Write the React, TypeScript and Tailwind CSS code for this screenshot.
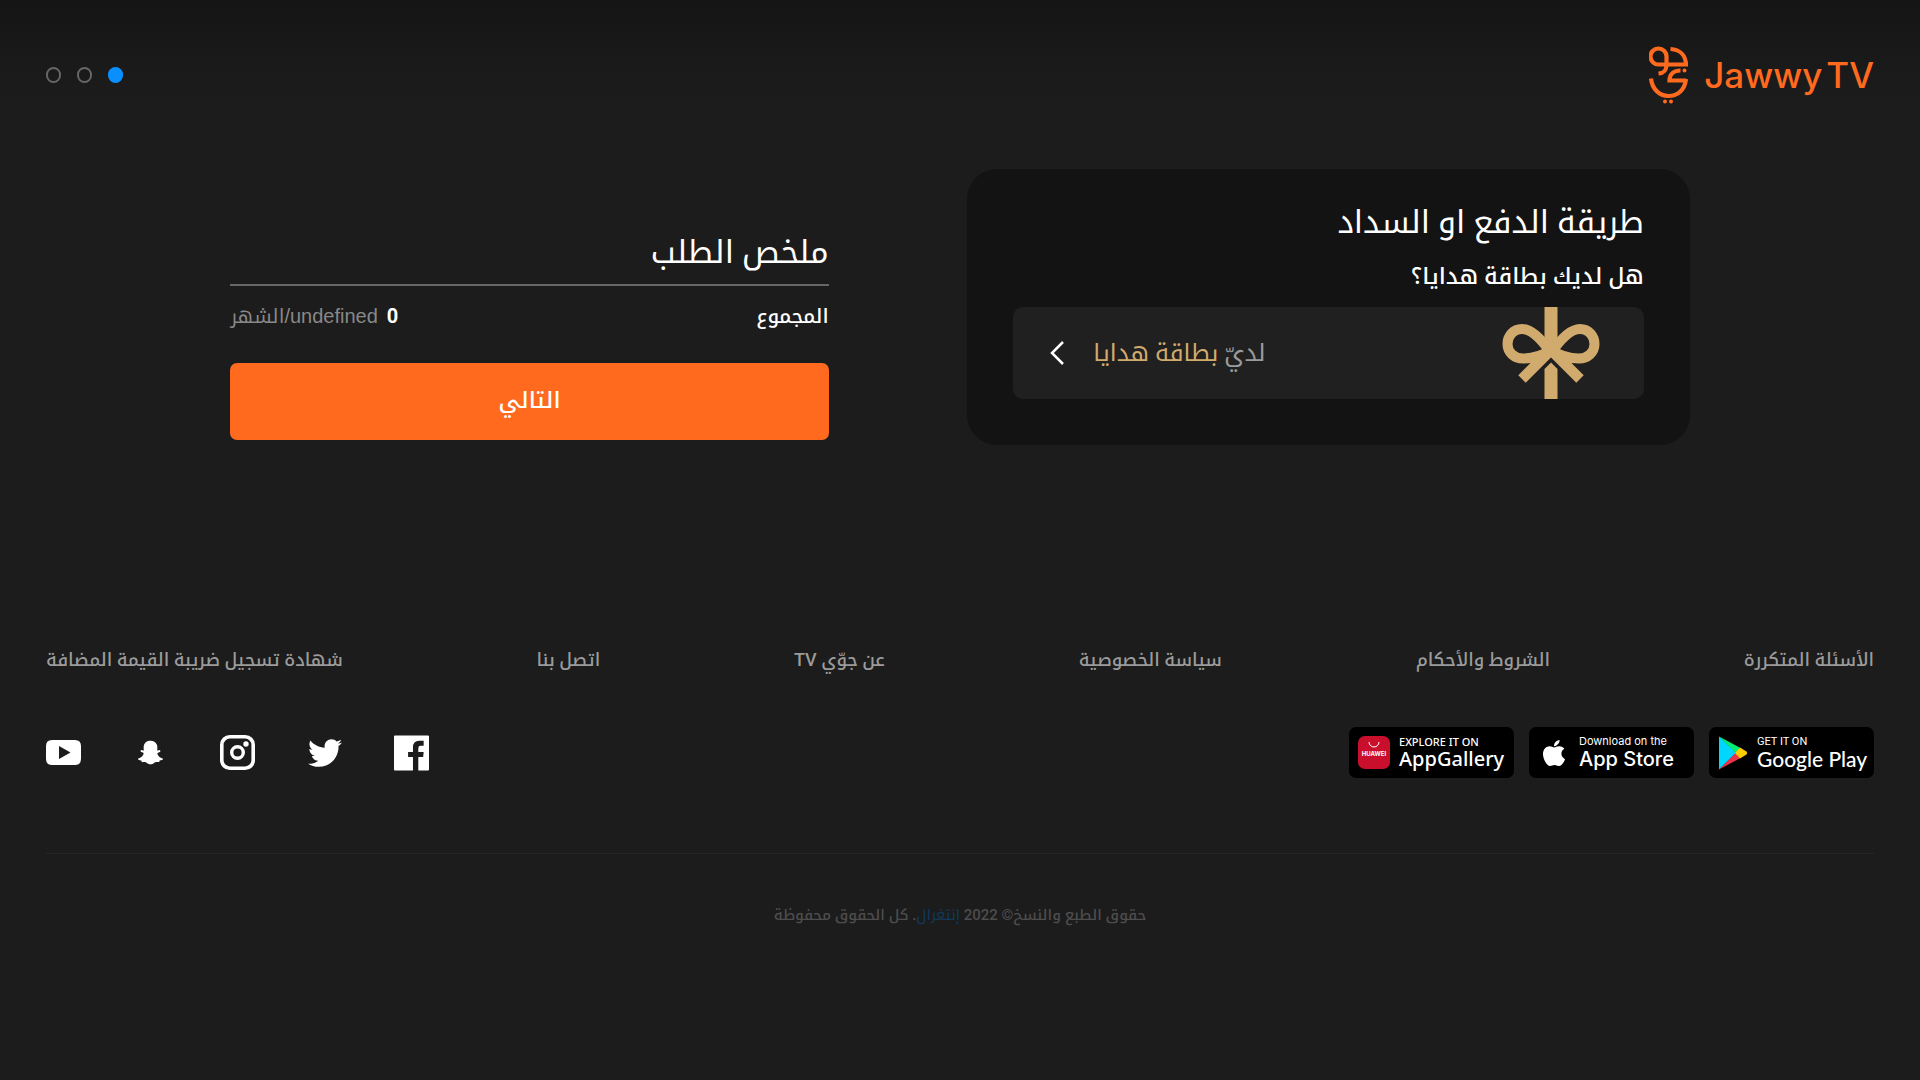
import React from "react";
import { FaApple, FaSnapchatGhost, FaTwitter } from "react-icons/fa";

function Logo() {
  return (
    <a href="#home" dir="ltr" aria-label="Jawwy TV" className="flex items-center gap-[15px] text-[#ff6a1f]">
      <svg viewBox="0 0 40 58" className="h-[58px] w-10" fill="none" stroke="currentColor" strokeWidth="4.2">
        <path d="M39 18.500H10A8 8 0 1 1 17.500 10.500V18.500C17.500 24.500 15 27 9.500 27.500" />
        <path d="M21.500 3C31 3.500 37 9.500 37 19.500" />
        <path d="M37 34.500H20.500C20.500 28 25 24.500 31.500 24.500" />
        <path d="M2 32.500C3 42.500 10 50 19.500 50S36 43.500 37 33" />
        <circle cx="35.500" cy="24.500" r="2" fill="currentColor" stroke="none" />
        <circle cx="16" cy="55.500" r="2" fill="currentColor" stroke="none" />
        <circle cx="22" cy="55.500" r="2" fill="currentColor" stroke="none" />
      </svg>
      <span className="flex gap-1 font-['Inter'] text-[35px] leading-none font-medium">
        <span>Jawwy</span>
        <span>TV</span>
      </span>
    </a>
  );
}

function Bow() {
  return (
    <svg viewBox="0 0 100 92" className="h-[92px] w-[100px]" fill="none" stroke="#d1ab6d">
      <path d="M50 0V46" strokeWidth="13" />
      <path d="M43.500 92V62L50 55.500L56.500 62V92Z" fill="#d1ab6d" stroke="none" />
      <path d="M50 46C41 33 31 22 21 22C12 22 6.500 29.500 6.500 37C6.500 45.500 13.500 51.500 22 51.500C32 51.500 41 49 50 43" strokeWidth="10" />
      <path d="M50 46C59 33 69 22 79 22C88 22 93.500 29.500 93.500 37C93.500 45.500 86.500 51.500 78 51.500C68 51.500 59 49 50 43" strokeWidth="10" />
      <path d="M52 41L21 72M48 41L79 72" strokeWidth="10.500" />
    </svg>
  );
}

function HuaweiIcon() {
  return (
    <span className="flex h-[33px] w-8 flex-col items-center rounded-[7px] bg-[#ca0f2c] pt-[6px]">
      <svg viewBox="0 0 12 6" className="h-[6px] w-3" fill="none" stroke="white" strokeWidth="1">
        <path d="M1 0A5 5 0 0 0 11 0" />
      </svg>
      <span className="mt-[2px] font-['Inter'] text-[6px] leading-[8px] font-bold">HUAWEI</span>
    </span>
  );
}

function PlayIcon() {
  return (
    <svg viewBox="0 0 30 34" className="h-[34px] w-[30px]">
      <path d="M1 0.500V33.500L18 17Z" fill="#00d7fe" />
      <path d="M1 0.500L22.500 12L17.500 17Z" fill="#00ee76" />
      <path d="M1 33.500L22.500 22L17.500 17Z" fill="#ee3348" />
      <path d="M22 11.500L28.500 15.500Q30 17 28.500 18.500L22 22.500L17 17Z" fill="#ffcc00" />
    </svg>
  );
}

const badges = [
  {
    label: "Google Play",
    icon: <PlayIcon />,
    top: "GET IT ON",
    bottom: "Google Play",
    iconClass: "flex w-12 shrink-0 justify-center",
    topClass: "font-['Roboto'] text-[11px] leading-[13px]",
    bottomClass: "font-['Lato'] text-[21px] leading-[22px] font-medium",
  },
  {
    label: "App Store",
    icon: <FaApple className="size-[30px]" />,
    top: "Download on the",
    bottom: "App Store",
    iconClass: "flex w-[50px] shrink-0 justify-center",
    topClass: "font-['Inter'] text-[11px] leading-[13px]",
    bottomClass: "font-['Inter'] text-[20px] leading-[22px] font-medium",
  },
  {
    label: "AppGallery",
    icon: <HuaweiIcon />,
    top: "EXPLORE IT ON",
    bottom: "AppGallery",
    iconClass: "flex w-[50px] shrink-0 justify-center",
    topClass: "font-['Noto_Sans'] text-[11px] leading-[13px] font-medium",
    bottomClass: "font-['Noto_Sans'] text-[20px] leading-[22px] font-medium",
  },
];

const socials = [
  {
    label: "Facebook",
    icon: (
      <svg viewBox="0 0 36 36" className="size-9" fill="currentColor">
        <path d="M1 0H35Q36 0 36 1V35Q36 36 35 36H25V22H30L30.500 17H25V13Q25 10.500 27.500 10.500H30.500V5.500H26Q19.500 5.500 19.500 12.500V17H14.500V22H19.500V36H1Q0 36 0 35V1Q0 0 1 0Z" />
      </svg>
    ),
  },
  { label: "Twitter", icon: <FaTwitter className="size-[34px]" /> },
  {
    label: "Instagram",
    icon: (
      <svg viewBox="0 0 35 35" className="size-[35px]" fill="none" stroke="currentColor">
        <rect x="1.800" y="1.800" width="31.400" height="31.400" rx="8" strokeWidth="3.600" />
        <circle cx="17.500" cy="17.500" r="5.800" strokeWidth="3.400" />
        <circle cx="26" cy="9" r="2.700" fill="currentColor" stroke="none" />
      </svg>
    ),
  },
  { label: "Snapchat", icon: <FaSnapchatGhost className="size-[25px]" /> },
  {
    label: "YouTube",
    icon: (
      <svg viewBox="0 0 35 25" className="h-[25px] w-[35px]" fill="currentColor">
        <path fillRule="evenodd" d="M6 0H29Q35 0 35 6V19Q35 25 29 25H6Q0 25 0 19V6Q0 0 6 0ZM13 6V19L24.500 12.500Z" />
      </svg>
    ),
  },
];

const links = [
  "الأسئلة المتكررة",
  "الشروط والأحكام",
  "سياسة الخصوصية",
  "عن جوّي TV",
  "اتصل بنا",
  "شهادة تسجيل ضريبة القيمة المضافة",
];

export default function App() {
  return (
    <div
      dir="rtl"
      lang="ar"
      className="min-h-screen bg-[#1c1c1c] bg-[linear-gradient(#151515,#1c1c1c_100px)] bg-no-repeat pb-10 font-['Roboto','Noto_Kufi_Arabic',sans-serif] text-white"
    >
      <header className="flex items-center justify-between px-[46px] pt-[46px]">
        <Logo />
        <ol className="flex gap-4">
          <li className="h-4 w-[15px] rounded-full bg-[#0a8fff]" />
          <li className="h-4 w-[15px] rounded-full border-2 border-[#666]" />
          <li className="h-4 w-[15px] rounded-full border-2 border-[#666]" />
        </ol>
      </header>

      <main className="flex items-start justify-between px-[12%] pt-[65px]">
        <section className="w-[49.5%] rounded-[30px] bg-[#131313] p-[46px] pt-8">
          <h1 className="text-[32px] leading-[42px]">طريقة الدفع او السداد</h1>
          <h2 className="mt-[18px] text-[23px] leading-[32px] font-medium">هل لديك بطاقة هدايا؟</h2>
          <button className="mt-[14px] flex h-[92px] w-full items-center justify-between rounded-[10px] bg-[#202020] ps-[43px] pe-[37px]">
            <Bow />
            <span className="flex items-center gap-[29px]">
              <span className="text-[24px] text-[#9b9b9b]">
                لديّ <span className="text-[#d1ab6d]">بطاقة هدايا</span>
              </span>
              <svg viewBox="0 0 14 24" className="h-6 w-[14px]" fill="none" stroke="white" strokeWidth="2.500">
                <path d="M13 1L2 12L13 23" />
              </svg>
            </span>
          </button>
        </section>
        <section className="mt-[62px] w-[41%]">
          <h2 className="border-b-2 border-[#666] pb-[11px] text-[32px] leading-[42px]">ملخص الطلب</h2>
          <div className="mt-[15px] flex justify-between text-[20px] leading-[30px] font-medium">
            <span>المجموع</span>
            <span>
              <b className="me-1">0</b>{" "}
              <span className="font-['Liberation_Sans','Noto_Kufi_Arabic'] font-normal text-[#888]">undefined/الشهر</span>
            </span>
          </div>
          <button className="mt-8 h-[77px] w-full rounded-[7px] bg-[#ff6a1f] text-[23px] font-medium">التالي</button>
        </section>
      </main>

      <footer className="mt-[200px] px-[46px]">
        <nav className="flex justify-between text-[18px] leading-[30px] font-medium text-[#9b9b9b]">
          {links.map((l) => (
            <a key={l} href="#info">
              {l}
            </a>
          ))}
        </nav>
        <div className="mt-[52px] flex items-center justify-between">
          <div className="flex gap-[15px]">
            {badges.map((b) => (
              <a
                key={b.label}
                href="#store"
                dir="ltr"
                aria-label={b.label}
                className="flex h-[51px] w-[165px] items-center rounded-[7px] bg-black"
              >
                <span className={b.iconClass}>{b.icon}</span>
                <span className="flex flex-col whitespace-nowrap">
                  <span className={b.topClass}>{b.top}</span>
                  <span className={b.bottomClass}>{b.bottom}</span>
                </span>
              </a>
            ))}
          </div>
          <div className="flex items-center gap-[52px]">
            {socials.map((s) => (
              <a key={s.label} href="#social" aria-label={s.label} className="flex w-[35px] justify-center">
                {s.icon}
              </a>
            ))}
          </div>
        </div>
        <div className="mt-[75px] border-t border-[#252525] pt-[49px] text-center text-[15px] leading-6 font-medium text-[#4d4d4d]">
          حقوق الطبع والنسخ© 2022{" "}
          <a href="#intigral" className="font-normal text-[#103a5c]">
            إنتغرال
          </a>
          . كل الحقوق محفوظة
        </div>
      </footer>
    </div>
  );
}
